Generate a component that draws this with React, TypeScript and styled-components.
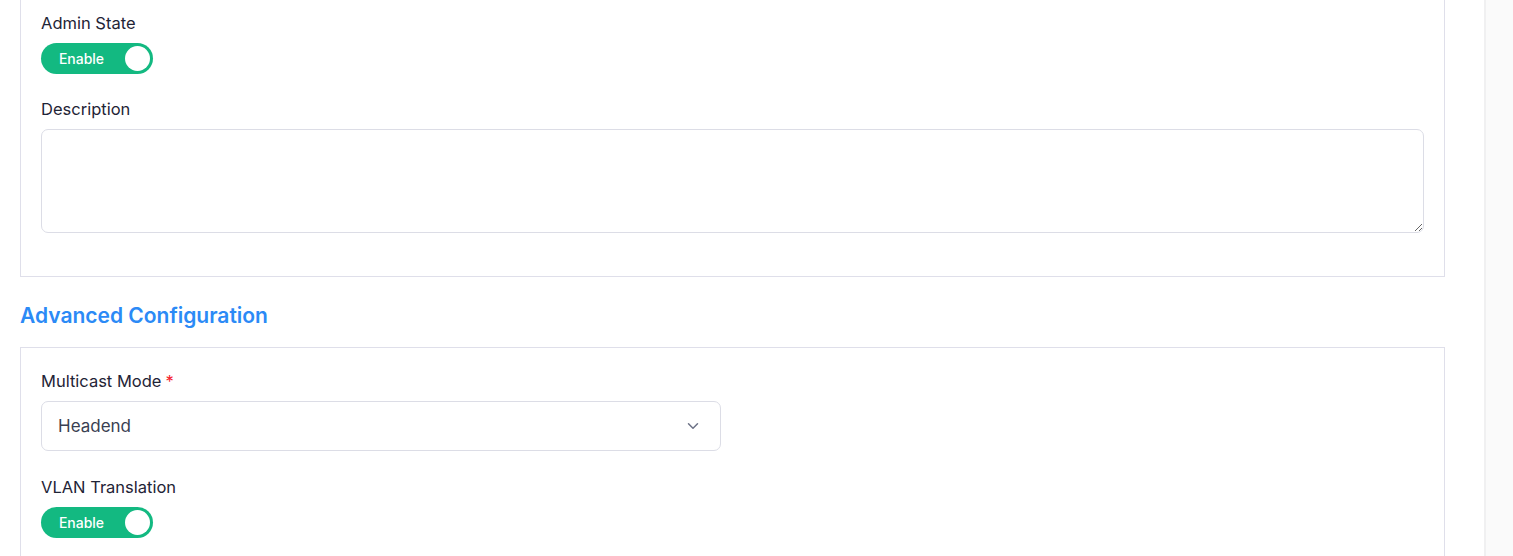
import React from "react"
import styled, { createGlobalStyle } from "styled-components"
import { FiChevronDown } from "react-icons/fi"

const GlobalStyle = createGlobalStyle`
  html, body {
    margin: 0;
    padding: 0;
    height: 100%;
    overflow: hidden;
    background: #ffffff;
    font-family: Inter, "Noto Sans", "Liberation Sans", sans-serif;
  }
`

const Layout = styled.div`
  display: flex;
  height: 556px;
  overflow: hidden;
`

const Main = styled.main`
  flex: 1;
  padding: 0 39px 0 20px;
  overflow: hidden;
`

// page is scrolled a little, so the first card's top edge sits above the fold
const Scrolled = styled.div`
  margin-top: -10px;
`

const SideStrip = styled.aside`
  width: 27px;
  flex-shrink: 0;
  background: #fafafa;
  border-left: 2px solid #f0f0f1;
`

interface CardProps {
  $top?: number
  $bottom?: number
  $gap?: number
}
const Card = styled.section<CardProps>`
  border: 1px solid #dfdfea;
  padding: ${props => props.$top ?? 22}px 20px ${props => props.$bottom ?? 20}px 20px;
  display: flex;
  flex-direction: column;
  gap: ${props => props.$gap ?? 26}px;
`

const SectionTitle = styled.h2`
  margin: 25px 0 17px 0;
  font-size: 21px;
  line-height: 28px;
  font-weight: 600;
  color: #2b8af6;
`

const Field = styled.div`
  display: flex;
  flex-direction: column;
  align-items: flex-start;
  gap: 10px;
`

const Label = styled.label`
  font-size: 16.5px;
  line-height: 20px;
  font-weight: 400;
  color: #1f2436;
`

const Required = styled.span`
  color: #f5222d;
  margin-left: 4px;
`

interface ToggleProps {
  $on: boolean
}
const Toggle = styled.button<ToggleProps>`
  position: relative;
  width: 112px;
  height: 31px;
  border: none;
  border-radius: 16px;
  background: ${props => (props.$on ? "#13b981" : "#c9ccd6")};
  color: #ffffff;
  font-family: inherit;
  font-size: 14px;
  font-weight: 500;
  padding: 0 31px 0 0;
  display: flex;
  align-items: center;
  justify-content: center;
  cursor: pointer;
`

const Knob = styled.span<ToggleProps>`
  position: absolute;
  top: 3px;
  ${props => (props.$on ? "right: 3px;" : "left: 3px;")}
  width: 25px;
  height: 25px;
  border-radius: 50%;
  background: #ffffff;
`

const TextArea = styled.textarea`
  width: 100%;
  box-sizing: border-box;
  height: 104px;
  border: 1px solid #dcdde6;
  border-radius: 7px;
  padding: 10px 14px;
  font-family: inherit;
  font-size: 15px;
  resize: vertical;
  outline: none;
`

const SelectBox = styled.div`
  width: 680px;
  height: 50px;
  box-sizing: border-box;
  border: 1px solid #dcdde6;
  border-radius: 7px;
  padding: 0 18px 0 16px;
  display: flex;
  align-items: center;
  justify-content: space-between;
  font-size: 17px;
  color: #394052;
  cursor: pointer;
`

const Chevron = styled(FiChevronDown)`
  color: #6d7287;
  font-size: 18px;
`

const Switch = ({ on, label }: { on: boolean; label: string }) => (
  <Toggle $on={on} type="button">
    {label}
    <Knob $on={on} />
  </Toggle>
)

export default function App() {
  return (
    <>
      <GlobalStyle />
      <Layout>
        <Main>
          <Scrolled>
            <Card $top={22} $bottom={43} $gap={25}>
              <Field>
                <Label>Admin State</Label>
                <Switch on label="Enable" />
              </Field>
              <Field>
                <Label>Description</Label>
                <TextArea />
              </Field>
            </Card>

            <SectionTitle>Advanced Configuration</SectionTitle>

            <Card $top={23} $gap={26}>
              <Field>
                <Label>
                  Multicast Mode<Required>*</Required>
                </Label>
                <SelectBox>
                  <span>Headend</span>
                  <Chevron />
                </SelectBox>
              </Field>
              <Field>
                <Label>VLAN Translation</Label>
                <Switch on label="Enable" />
              </Field>
            </Card>
          </Scrolled>
        </Main>
        <SideStrip />
      </Layout>
    </>
  )
}
